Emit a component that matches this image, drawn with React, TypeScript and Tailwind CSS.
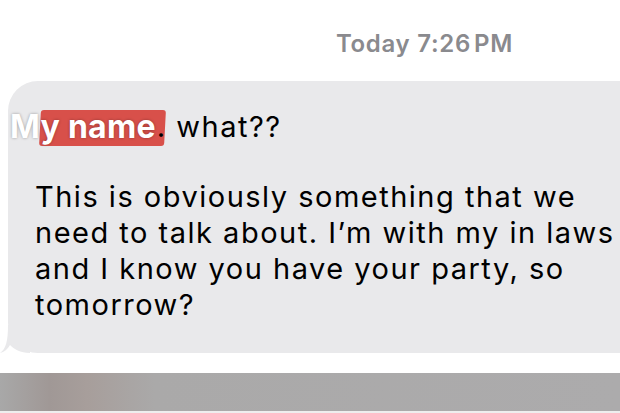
export default function App() {
  return (
    <div className="flex h-[413px] w-[620px] flex-col overflow-hidden bg-white font-['Inter',sans-serif]">
      <div className="flex h-[81px] items-start justify-end pr-[107px] pt-[30px]">
        <span className="text-[24px] font-semibold leading-[28px] tracking-[0.7px] text-[#8a8a8e]">
          Today 7:26<span className="ml-[3px]">PM</span>
        </span>
      </div>

      <div className="relative ml-[8px] h-[272px] w-[620px]">
        <div className="h-full w-full rounded-l-[30px] bg-[#e9e9eb] pl-[27px] pt-[28px] text-[29px] leading-[36px] tracking-[1.5px] whitespace-nowrap text-black">
          <div className="relative -ml-[25px] flex items-center">
            <span className="absolute left-[30px] top-[1px] h-[36px] w-[125px] -skew-x-3 rounded-[3px] bg-[#d8504a]" />
            <span className="relative text-[32px] font-bold tracking-[0.3px] text-white [text-shadow:0_0_3px_rgba(0,0,0,0.35)]">
              My name
            </span>
            <span className="relative ml-[1px]">. what??</span>
          </div>
          <p className="mt-[34px]">
            This is obviously something that we
            <br />
            need to talk about. I’m with my in laws
            <br />
            and I know you have your party, so
            <br />
            tomorrow?
          </p>
        </div>
        <svg
          className="absolute -left-[8px] bottom-0"
          width="32"
          height="28"
          viewBox="0 0 32 28"
        >
          <path d="M8 0 L30 0 L30 28 C20 28 14 24 10 20 C8 24 4 27 0 28 C6 24 8 16 8 0 Z" fill="#e9e9eb" />
        </svg>
      </div>

      <div className="mt-[20px] h-[38px] w-full bg-[linear-gradient(90deg,#a8a8a8_0%,#a09896_8%,#a79e9b_14%,#aaa9a9_25%,#acabac_100%)]" />
      <div className="h-[2px] w-full bg-[#eeeeee]" />
    </div>
  );
}
